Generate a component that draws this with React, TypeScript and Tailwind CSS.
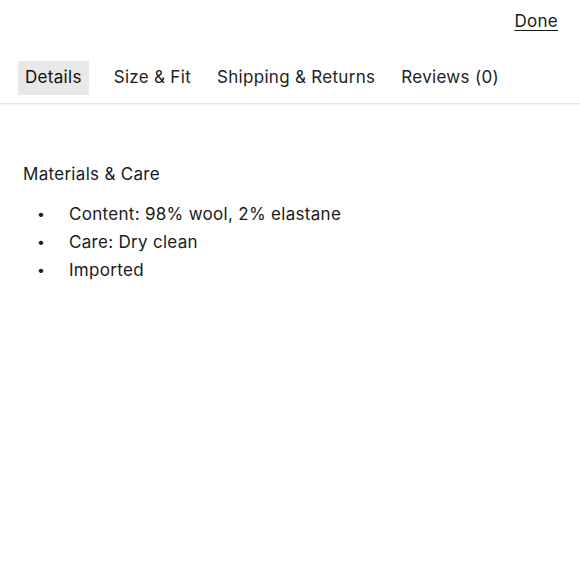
import React, { useState } from 'react';
import clsx from 'clsx';

const tabs = ['Details', 'Size & Fit', 'Shipping & Returns', 'Reviews (0)'];
const items = ['Content: 98% wool, 2% elastane', 'Care: Dry clean', 'Imported'];

export default function App() {
  const [active, setActive] = useState('Details');

  return (
    <div className="h-[580px] w-[580px] bg-white text-[#1a1a1a] font-['Inter','Liberation_Sans',sans-serif] tracking-[0.3px]">
      <div className="flex justify-end px-[22px] pt-[10px]">
        <button type="button" className="text-[17px] leading-[22px] underline underline-offset-[3px]">Done</button>
      </div>

      <div className="mt-[29px] flex items-center gap-[12px] border-b border-[#e6e6e6] px-[18px] pb-[8px] shadow-[0_1px_1px_rgba(0,0,0,0.04)]">
        {tabs.map((tab, i) => (
          <button
            key={tab}
            type="button"
            onClick={() => setActive(tab)}
            className={clsx(
              'h-[34px] px-[7px] text-[17px]',
              i === 0 && 'mr-[6px]',
              active === tab ? 'bg-[#e8e8e8] text-[#111]' : 'text-[#222]'
            )}
          >
            {tab}
          </button>
        ))}
      </div>

      <div className="px-[23px] pt-[58px]">
        <p className="text-[17px] leading-[24px]">Materials &amp; Care</p>
        <ul className="mt-[16px] space-y-[4px]">
          {items.map((item) => (
            <li key={item} className="flex items-center text-[17px] leading-[24px]">
              <span className="w-[46px] pl-[14px] text-[14px]">•</span>
              {item}
            </li>
          ))}
        </ul>
      </div>
    </div>
  );
}
